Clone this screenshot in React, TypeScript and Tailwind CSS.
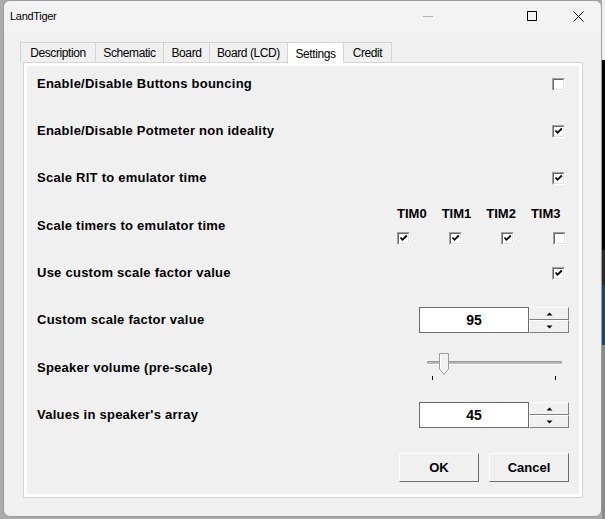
import React from 'react';

const font = { fontFamily: '"Liberation Sans", Arial, sans-serif' };

function Check({ checked }: { checked: boolean }) {
  return (
    <span className="inline-flex h-[13px] w-[13px] border border-t-[#a0a0a0] border-l-[#a0a0a0] border-b-white border-r-white">
      <span className="flex h-full w-full items-center justify-center border border-t-[#696969] border-l-[#696969] border-b-[#e3e3e3] border-r-[#e3e3e3] bg-white">
        {checked && (
          <svg width="9" height="9" viewBox="0 0 9 9">
            <path d="M1.5 3.5 L3.5 5.8 L7.8 1.5" fill="none" stroke="#000" strokeWidth="1.8" />
          </svg>
        )}
      </span>
    </span>
  );
}

function Arrow({ up }: { up: boolean }) {
  return (
    <svg width="7" height="4" viewBox="0 0 7 4">
      <path d={up ? 'M0.5 3.5 L3.5 0.5 L6.5 3.5 Z' : 'M0.5 0.5 L3.5 3.5 L6.5 0.5 Z'} fill="#000" />
    </svg>
  );
}

function SpinBox({ value }: { value: string }) {
  return (
    <div className="mr-[10px] flex h-[26px]">
      <div className="flex h-full w-[110px] items-center justify-center border border-[#6b6b6b] bg-white text-[14px] font-bold text-black">
        {value}
      </div>
      <div className="flex w-[40px] flex-col">
        <button className="flex h-[13px] items-center justify-center border border-t-white border-l-white border-b-[#808080] border-r-[#808080] bg-[#f0f0f0]">
          <Arrow up />
        </button>
        <button className="flex h-[13px] items-center justify-center border border-t-white border-l-white border-b-[#808080] border-r-[#808080] bg-[#f0f0f0]">
          <Arrow up={false} />
        </button>
      </div>
    </div>
  );
}

function Slider() {
  return (
    <svg className="mr-[15px]" width="138" height="30" viewBox="0 0 138 30">
      <rect x="1" y="8" width="135" height="3" fill="#b8b8b8" />
      <line x1="1" y1="8.5" x2="136" y2="8.5" stroke="#9a9a9a" />
      <line x1="1" y1="11.5" x2="136" y2="11.5" stroke="#ffffff" />
      <polygon points="13.5,0.5 22.5,0.5 22.5,16 18,21.5 13.5,16" fill="#f2f2f2" stroke="#9c9c9c" />
      <line x1="14.5" y1="1.5" x2="14.5" y2="15.5" stroke="#ffffff" />
      <line x1="6.5" y1="23" x2="6.5" y2="27" stroke="#000" />
      <line x1="129.5" y1="23" x2="129.5" y2="27" stroke="#000" />
    </svg>
  );
}

const tabs = [
  { name: 'Description', w: 'w-[75px]' },
  { name: 'Schematic', w: 'w-[68px]' },
  { name: 'Board', w: 'w-[46px]' },
  { name: 'Board (LCD)', w: 'w-[78px]' },
  { name: 'Settings', w: 'w-[56px]', active: true },
  { name: 'Credit', w: 'w-[49px]' },
];

function Row({ label, children, extra }: { label: string; children: React.ReactNode; extra?: string }) {
  return (
    <div className={`flex h-[24px] items-center justify-between pl-[10px] ${extra ?? ''}`}>
      <span className="text-[13px] font-bold tracking-[0.25px] text-black">{label}</span>
      {children}
    </div>
  );
}

export default function App() {
  return (
    <div className="flex h-[519px] w-[605px] overflow-hidden bg-[#ababab]" style={font}>
      {/* Dialog window */}
      <div className="ml-[3px] flex h-[517px] w-[599px] flex-col rounded-[7px] border border-[#9a9a9a] bg-[#f0f0f0]">
        {/* Title bar */}
        <div className="flex h-[30px] items-center rounded-t-[7px] bg-[#f3f3f3] pl-[6px]">
          <span className="text-[11px] tracking-[-0.3px] text-black">LandTiger</span>
          <div className="ml-auto flex h-full items-center">
            <span className="mr-[58px] flex w-[46px] justify-center">
              <span className="block h-px w-[10px] bg-[#b4b4b4]" />
            </span>
            <span className="flex w-[46px] justify-center">
              <span className="block h-[10px] w-[10px] border border-black" />
            </span>
            <span className="flex w-[46px] justify-center">
              <svg width="11" height="11" viewBox="0 0 11 11">
                <path d="M0.5 0.5 L10.5 10.5 M10.5 0.5 L0.5 10.5" stroke="#000" strokeWidth="1" />
              </svg>
            </span>
          </div>
        </div>

        {/* Tabs */}
        <div className="mt-[11px] pl-[16px]">
          <div className="flex h-[20px] items-start">
            {tabs.map((t, i) => (
              <div
                key={t.name}
                className={`${t.w} flex items-center justify-center border-t border-l border-[#d4d4d4] text-[12px] tracking-[-0.4px] text-black ${
                  i === tabs.length - 1 ? 'border-r' : ''
                } ${t.active ? 'relative z-10 h-[22px] bg-white' : 'h-[20px] bg-[#f0f0f0]'}`}
              >
                {t.name}
              </div>
            ))}
          </div>

          {/* Panel */}
          <div className="ml-[3px] h-[436px] w-[560px] border border-[#d4d4d4] bg-white p-[3px]">
            <div className="flex h-full flex-col bg-[#f0f0f0] pt-[6px]">
              <div className="flex flex-col gap-[23px]">
                <Row label="Enable/Disable Buttons bouncing">
                  <span className="mr-[14px] flex"><Check checked={false} /></span>
                </Row>
                <Row label="Enable/Disable Potmeter non ideality">
                  <span className="mr-[14px] flex"><Check checked /></span>
                </Row>
                <Row label="Scale RIT to emulator time">
                  <span className="mr-[14px] flex"><Check checked /></span>
                </Row>
                <Row label="Scale timers to emulator time" extra="mt-px">
                  <div className="mr-[13px] flex flex-col gap-[11px]">
                    <div className="flex gap-[15px] text-[13px] font-bold leading-[14px] text-black">
                      <span>TIM0</span>
                      <span>TIM1</span>
                      <span>TIM2</span>
                      <span>TIM3</span>
                    </div>
                    <div className="flex gap-[39px]">
                      <Check checked />
                      <Check checked />
                      <Check checked />
                      <Check checked={false} />
                    </div>
                  </div>
                </Row>
                <Row label="Use custom scale factor value">
                  <span className="mr-[14px] flex"><Check checked /></span>
                </Row>
                <Row label="Custom scale factor value">
                  <SpinBox value="95" />
                </Row>
                <Row label="Speaker volume (pre-scale)" extra="mt-px">
                  <Slider />
                </Row>
                <Row label="Values in speaker's array">
                  <SpinBox value="45" />
                </Row>
              </div>

              {/* Buttons */}
              <div className="mt-[26px] flex justify-end gap-[10px] pr-[10px]">
                <button className="h-[29px] w-[80px] border border-t-[#fdfdfd] border-l-[#fdfdfd] border-b-[#6b6b6b] border-r-[#6b6b6b] bg-[#f0f0f0] text-[13px] font-bold text-black">
                  OK
                </button>
                <button className="h-[29px] w-[80px] border border-t-[#fdfdfd] border-l-[#fdfdfd] border-b-[#6b6b6b] border-r-[#6b6b6b] bg-[#f0f0f0] text-[13px] font-bold text-black">
                  Cancel
                </button>
              </div>
            </div>
          </div>
        </div>
      </div>

      {/* Background strip on the right */}
      <div className="flex w-[3px] flex-col">
        <div className="h-[60px] bg-[#f0f0f0]" />
        <div className="h-[190px] bg-black" />
        <div className="h-[35px] bg-[#2a2a2a]" />
        <div className="h-[60px] bg-[#0f4a6e]" />
        <div className="flex-1 bg-[#8a8a8a]" />
      </div>
    </div>
  );
}
